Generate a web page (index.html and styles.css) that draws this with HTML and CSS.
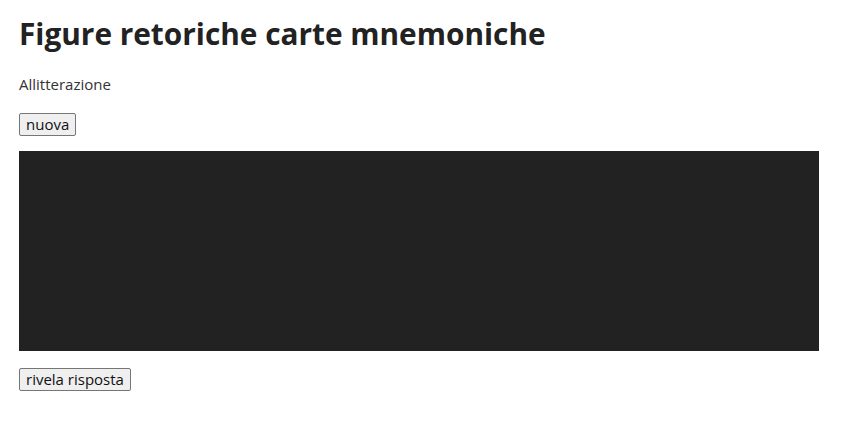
FILE: index.html
```html
<!DOCTYPE html>
<html lang="it">
<head>
<meta charset="utf-8">
<title>Figure retoriche carte mnemoniche</title>
<link rel="stylesheet" href="styles.css">
</head>
<body>
<main class="app">
  <h1 class="title">Figure retoriche carte mnemoniche</h1>
  <p class="prompt">Allitterazione</p>
  <button class="btn" type="button">nuova</button>
  <div class="card"></div>
  <button class="btn" type="button">rivela risposta</button>
</main>
</body>
</html>
```

FILE: styles.css
```css
html, body {
  margin: 0;
  padding: 0;
  background: #ffffff;
}
body {
  font-family: "Open Sans", "Noto Sans", sans-serif;
  color: #222222;
}
.app {
  padding: 10px 19px;
  display: flex;
  flex-direction: column;
  align-items: flex-start;
}
.title {
  margin: 0;
  padding-top: 4px;
  font-size: 29.8px;
  font-weight: 700;
  line-height: 40px;
  color: #222222;
}
.prompt {
  margin: 20px 0 0;
  font-size: 15px;
  line-height: 20px;
  color: #333333;
}
.btn {
  margin-top: 19px;
  font-family: "Open Sans", "Noto Sans", sans-serif;
  font-size: 15px;
  line-height: 19px;
  padding: 1px 6px;
  color: #111111;
  background: #efefef;
  border: 1px solid #767676;
  border-radius: 2px;
}
.card {
  margin-top: 15px;
  width: 800px;
  height: 200px;
  background: #222222;
}
.card + .btn {
  margin-top: 17px;
}
```
